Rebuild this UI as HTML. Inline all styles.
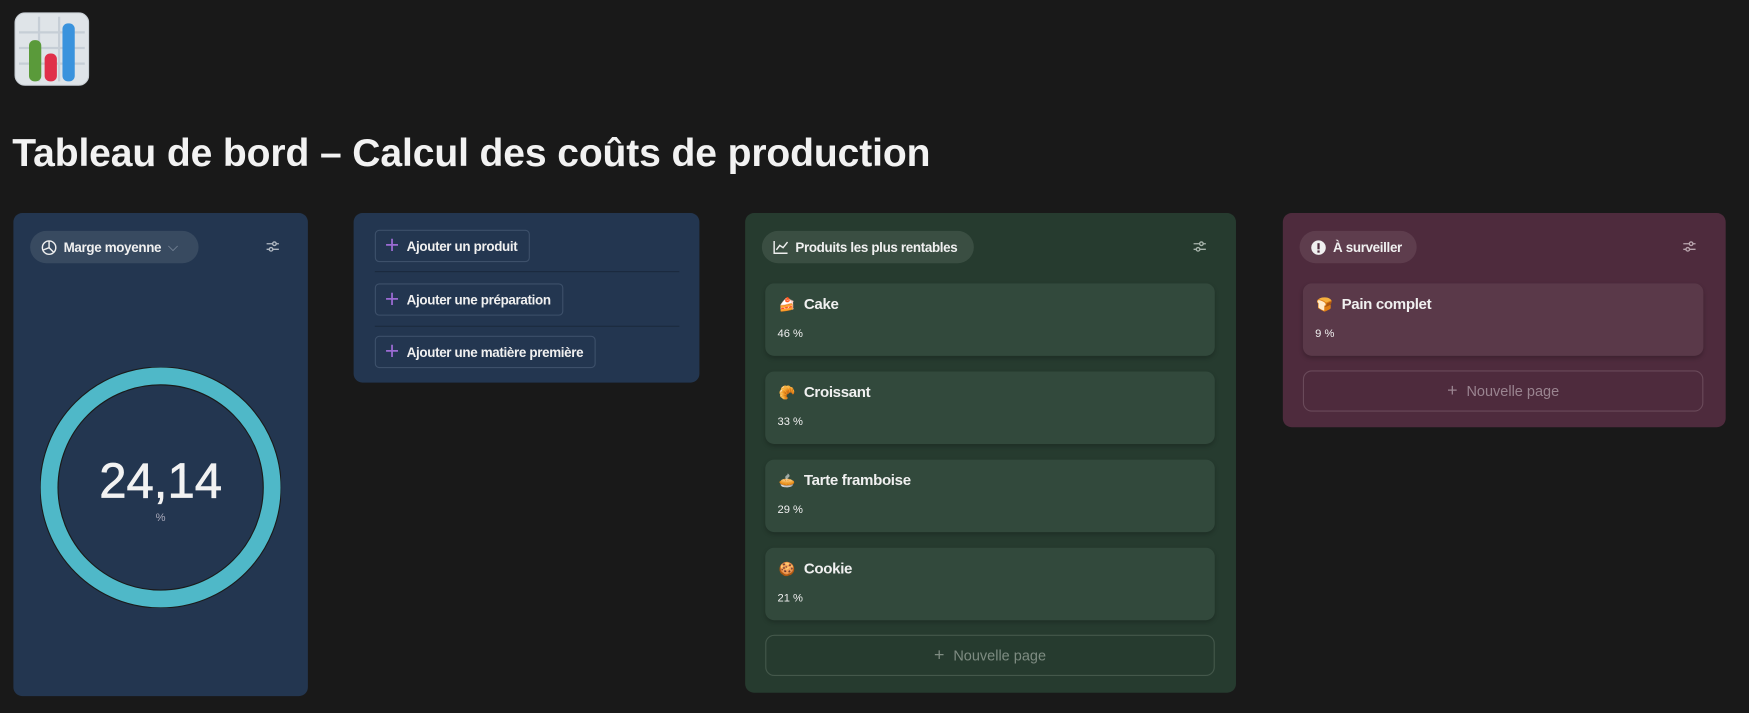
<!DOCTYPE html>
<html><head><meta charset="utf-8"><style>
html,body{margin:0;padding:0;background:#191919;overflow:hidden;width:1749px;height:713px}
#w{position:absolute;left:0;top:0;width:1568px;height:639px;transform:scale(1.1155);transform-origin:0 0;font-family:"Liberation Sans","Noto Sans CJK JP",sans-serif;color:#f0f0f0}
.a{position:absolute;box-sizing:border-box}
.panel{border-radius:8px}
.pill{border-radius:15px;height:29px;font-size:12px;letter-spacing:-0.3px;white-space:nowrap;font-weight:bold;display:flex;align-items:center;padding-left:10px;gap:6px}
.btn{border:1px solid #3d506a;border-radius:4px;height:29px;font-size:12px;letter-spacing:-0.3px;white-space:nowrap;font-weight:bold;display:flex;align-items:center;padding:0 10px 0 8px;gap:7px}
.plus{color:#9b6bd3;font-size:22px;font-weight:normal;line-height:1;margin-top:-2px}
.card{border-radius:8px;box-shadow:0 2px 4px rgba(0,0,0,.2)}
.ct{position:absolute;left:12px;top:11px;font-size:13.5px;letter-spacing:-0.3px;font-weight:bold;display:flex;align-items:center;gap:8px}
.cp{position:absolute;left:11px;top:40px;font-size:10px}
.np{border-radius:8px;display:flex;align-items:center;justify-content:center;font-size:13px;gap:8px}
</style></head><body><div id="w">
<svg class="a" style="left:13px;top:11px" width="67" height="66" viewBox="0 0 67 66">
<rect x="0.5" y="0.5" width="66" height="65" rx="9" fill="#dfe4e8" stroke="#c8ced4"/>
<g stroke="#c6ced6" stroke-width="2"><line x1="4" y1="18" x2="63" y2="18"/><line x1="4" y1="32" x2="63" y2="32"/><line x1="4" y1="46" x2="63" y2="46"/><line x1="22" y1="4" x2="22" y2="62"/><line x1="40" y1="4" x2="40" y2="62"/></g>
<rect x="13" y="25" width="11" height="37" rx="5" fill="#5a9a3a"/>
<rect x="27" y="37" width="11" height="25" rx="5" fill="#e0304a"/>
<rect x="43" y="10" width="11" height="52" rx="5" fill="#3a93dd"/>
</svg>
<div class="a" style="left:11px;top:118px;font-size:35px;font-weight:bold;letter-spacing:-0.1px;white-space:nowrap;color:#f2f2f2">Tableau de bord – Calcul des coûts de production</div>

<div class="a panel" style="left:12px;top:191px;width:264px;height:433px;background:#233650"></div>
<div class="a pill" style="left:27px;top:207px;width:151px;background:#384a60"><svg width="14" height="14" viewBox="0 0 14 14" fill="none" stroke="#eee" stroke-width="1.3"><circle cx="7" cy="7" r="6"/><path d="M7 1v6l4 4M7 7l-5 2"/></svg>Marge moyenne <span style="color:#8a97a8;font-weight:normal">⌵</span></div>
<svg class="a" style="left:238px;top:215px" width="13" height="12" viewBox="0 0 13 12" stroke="#b0b8c2" stroke-width="1.2"><line x1="1" y1="3.5" x2="12" y2="3.5"/><line x1="1" y1="8.5" x2="12" y2="8.5"/><circle cx="8" cy="3.5" r="1.6" fill="#233650"/><circle cx="5" cy="8.5" r="1.6" fill="#233650"/></svg>
<svg class="a" style="left:36px;top:329px" width="216" height="216" viewBox="0 0 216 216"><circle cx="108" cy="108" r="100" fill="none" stroke="#1a1a1a" stroke-width="17"/><circle cx="108" cy="108" r="100" fill="none" stroke="#4fb8c8" stroke-width="15"/></svg>
<div class="a" style="left:44px;top:407px;width:200px;text-align:center;font-size:44px;color:#f2f2f2;-webkit-text-stroke:0.6px #f2f2f2">24,14</div>
<div class="a" style="left:44px;top:459px;width:200px;text-align:center;font-size:10px;color:#aab">%</div>

<div class="a panel" style="left:317px;top:191px;width:310px;height:152px;background:#233650"></div>
<div class="a btn" style="left:336px;top:206px"><span class="plus">+</span>Ajouter un produit</div>
<div class="a" style="left:336px;top:243px;width:273px;height:1px;background:#1b2a3e"></div>
<div class="a btn" style="left:336px;top:254px"><span class="plus">+</span>Ajouter une préparation</div>
<div class="a" style="left:336px;top:292px;width:273px;height:1px;background:#1b2a3e"></div>
<div class="a btn" style="left:336px;top:301px"><span class="plus">+</span>Ajouter une matière première</div>

<div class="a panel" style="left:668px;top:191px;width:440px;height:430px;background:#263b2f"></div>
<div class="a pill" style="left:683px;top:207px;width:190px;background:#3a4e42"><svg width="14" height="13" viewBox="0 0 14 13" fill="none" stroke="#eee" stroke-width="1.3"><path d="M1 1v11h12M3 9l3-4 3 2 4-5"/></svg>Produits les plus rentables</div>
<svg class="a" style="left:1069px;top:215px" width="13" height="12" viewBox="0 0 13 12" stroke="#a8b4ac" stroke-width="1.2"><line x1="1" y1="3.5" x2="12" y2="3.5"/><line x1="1" y1="8.5" x2="12" y2="8.5"/><circle cx="8" cy="3.5" r="1.6" fill="#263b2f"/><circle cx="5" cy="8.5" r="1.6" fill="#263b2f"/></svg>
<div class="a card" style="left:686px;top:254px;width:403px;height:65px;background:#32493c"><div class="ct"><span style="font-size:12px">🍰</span>Cake</div><div class="cp">46 %</div></div>
<div class="a card" style="left:686px;top:333px;width:403px;height:65px;background:#32493c"><div class="ct"><span style="font-size:12px">🥐</span>Croissant</div><div class="cp">33 %</div></div>
<div class="a card" style="left:686px;top:412px;width:403px;height:65px;background:#32493c"><div class="ct"><span style="font-size:12px">🥧</span>Tarte framboise</div><div class="cp">29 %</div></div>
<div class="a card" style="left:686px;top:491px;width:403px;height:65px;background:#32493c"><div class="ct"><span style="font-size:12px">🍪</span>Cookie</div><div class="cp">21 %</div></div>
<div class="a np" style="left:686px;top:569px;width:403px;height:37px;border:1px solid #44584b;color:#7e8c82"><span style="font-size:16px">+</span>Nouvelle page</div>

<div class="a panel" style="left:1150px;top:191px;width:397px;height:192px;background:#4e2b3d"></div>
<div class="a pill" style="left:1165px;top:207px;width:105px;background:#5e3d4d"><svg width="14" height="14" viewBox="0 0 14 14"><circle cx="7" cy="7" r="6.5" fill="#f0f0f0"/><rect x="6" y="3" width="2" height="5.5" fill="#4e2b3d"/><rect x="6" y="9.5" width="2" height="2" fill="#4e2b3d"/></svg>À surveiller</div>
<svg class="a" style="left:1508px;top:215px" width="13" height="12" viewBox="0 0 13 12" stroke="#b9a5ae" stroke-width="1.2"><line x1="1" y1="3.5" x2="12" y2="3.5"/><line x1="1" y1="8.5" x2="12" y2="8.5"/><circle cx="8" cy="3.5" r="1.6" fill="#4e2b3d"/><circle cx="5" cy="8.5" r="1.6" fill="#4e2b3d"/></svg>
<div class="a card" style="left:1168px;top:254px;width:359px;height:65px;background:#5a3949"><div class="ct"><span style="font-size:12px">🍞</span>Pain complet</div><div class="cp">9 %</div></div>
<div class="a np" style="left:1168px;top:332px;width:359px;height:37px;border:1px solid #6a4a5a;color:#9a8490"><span style="font-size:16px">+</span>Nouvelle page</div>
</div></body></html>
